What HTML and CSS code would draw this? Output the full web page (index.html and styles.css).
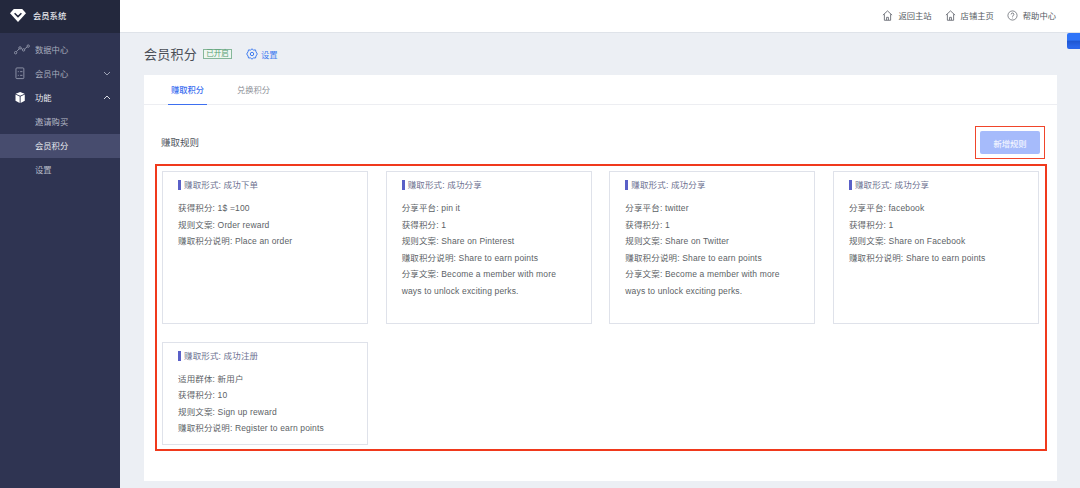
FILE: index.html
```html
<!DOCTYPE html>
<html lang="zh">
<head>
<meta charset="utf-8">
<title>会员积分</title>
<link rel="stylesheet" href="styles.css">
</head>
<body>
<div class="app">
  <aside class="sidebar">
    <div class="brand">
      <svg class="brand-icon" viewBox="0 0 16 13"><path fill="#fff" d="M3.800 0h8.400L16 4.300 8 13 0 4.300z"/><path fill="none" stroke="#23283d" stroke-width="1.500" d="M4.600 4.300L8 7.600l3.400-3.300"/></svg>
      <span>会员系统</span>
    </div>
    <nav class="nav">
      <a class="nav-item">
        <svg class="nav-icon" viewBox="0 0 16 10"><g fill="none" stroke="#9ca1b4" stroke-width=".8"><circle cx="1.600" cy="8.200" r="1.200"/><circle cx="6" cy="3.400" r="1.200"/><circle cx="9.600" cy="5.400" r="1.200"/><circle cx="14.200" cy="1.600" r="1.200"/><path d="M2.400 7.200l2.800-2.900M7.100 4l1.400.8M10.500 4.600l2.800-2.200"/></g></svg>
        <span>数据中心</span>
      </a>
      <a class="nav-item">
        <svg class="nav-icon" viewBox="0 0 16 14"><g fill="none" stroke="#9ca1b4" stroke-width=".9"><rect x="1.500" y="1" width="8.500" height="11.500" rx="1"/><path d="M3.500 5h1M6 5h2.500M3.500 9h1M6 9h2.500"/></g></svg>
        <span>会员中心</span>
        <svg class="chev" viewBox="0 0 8 5"><path fill="none" stroke="#9ca1b4" d="M1 1l3 3 3-3"/></svg>
      </a>
      <a class="nav-item nav-open">
        <svg class="nav-icon" viewBox="0 0 16 14"><path fill="#fff" d="M6 1l4.800 2-4.800 2-4.800-2zM1 3.900l4.500 1.900v7L1 10.600zM11 3.900v6.700l-4.500 2.200v-7z"/></svg>
        <span>功能</span>
        <svg class="chev" viewBox="0 0 8 5"><path fill="none" stroke="#d8dae3" d="M1 4l3-3 3 3"/></svg>
      </a>
      <a class="nav-sub">邀请购买</a>
      <a class="nav-sub nav-active">会员积分</a>
      <a class="nav-sub">设置</a>
    </nav>
  </aside>
  <div class="main">
    <header class="topbar">
      <a class="top-link">
        <svg class="top-icon" viewBox="0 0 12 12"><path fill="none" stroke="#5c6068" stroke-width=".9" d="M1 5.600L6 1l5 4.600M2.600 4.600v6.600h6.800V4.600M5 11V8h2v3"/></svg>
        <span>返回主站</span>
      </a>
      <a class="top-link">
        <svg class="top-icon" viewBox="0 0 12 12"><path fill="none" stroke="#5c6068" stroke-width=".9" d="M1 5.600L6 1l5 4.600M2.600 4.600v6.600h6.800V4.600M5 11V8h2v3"/></svg>
        <span>店铺主页</span>
      </a>
      <a class="top-link">
        <svg class="top-icon" viewBox="0 0 12 12"><circle cx="6" cy="6" r="5" fill="none" stroke="#5c6068" stroke-width=".8"/><path fill="none" stroke="#5c6068" stroke-width=".9" d="M4.500 4.800c0-2 3-2 3 0 0 1.200-1.500 1.200-1.500 2.500"/><circle cx="6" cy="8.800" r=".5" fill="#5c6068"/></svg>
        <span>帮助中心</span>
      </a>
    </header>
    <div class="float-tab"></div>
    <main class="content">
      <div class="page-head">
        <h1>会员积分</h1>
        <span class="status">已开启</span>
        <a class="settings">
          <svg class="gear" viewBox="0 0 12 12"><g fill="none" stroke="#3f7cf0" stroke-width="1"><path d="M6 .8l1.500 1.300 2-.2.500 1.900L11.300 6 10 8 9.500 10l-2-.1L6 11.200 4.500 9.900l-2 .1L2 8 .7 6 2 3.800l.5-1.900 2 .2z"/><circle cx="6" cy="6" r="1.700"/></g></svg>
          <span>设置</span>
        </a>
      </div>
      <section class="panel">
        <div class="tabs">
          <a class="tab tab-active">赚取积分</a>
          <a class="tab">兑换积分</a>
        </div>
        <div class="rules-head">
          <h2>赚取规则</h2>
          <div class="btn-mark"><button class="btn" type="button">新增规则</button></div>
        </div>
        <div class="cards-mark">
          <div class="cards">
            <article class="card">
              <h3>赚取形式: 成功下单</h3>
              <p>获得积分: 1$ =100</p>
              <p>规则文案: Order reward</p>
              <p>赚取积分说明: Place an order</p>
            </article>
            <article class="card">
              <h3>赚取形式: 成功分享</h3>
              <p>分享平台: pin it</p>
              <p>获得积分: 1</p>
              <p>规则文案: Share on Pinterest</p>
              <p>赚取积分说明: Share to earn points</p>
              <p>分享文案: Become a member with more ways to unlock exciting perks.</p>
            </article>
            <article class="card">
              <h3>赚取形式: 成功分享</h3>
              <p>分享平台: twitter</p>
              <p>获得积分: 1</p>
              <p>规则文案: Share on Twitter</p>
              <p>赚取积分说明: Share to earn points</p>
              <p>分享文案: Become a member with more ways to unlock exciting perks.</p>
            </article>
            <article class="card">
              <h3>赚取形式: 成功分享</h3>
              <p>分享平台: facebook</p>
              <p>获得积分: 1</p>
              <p>规则文案: Share on Facebook</p>
              <p>赚取积分说明: Share to earn points</p>
            </article>
            <article class="card">
              <h3>赚取形式: 成功注册</h3>
              <p>适用群体: 新用户</p>
              <p>获得积分: 10</p>
              <p>规则文案: Sign up reward</p>
              <p>赚取积分说明: Register to earn points</p>
            </article>
          </div>
        </div>
      </section>
    </main>
  </div>
</div>
</body>
</html>
```
FILE: styles.css
```css
* { box-sizing: border-box; }
html, body { margin: 0; height: 488px; overflow: hidden; }
body { font-family: "Liberation Sans", "Noto Sans CJK SC", sans-serif; font-size: 8.300px; color: #555; background: #eceff4; }
.app { display: flex; height: 488px; }
.sidebar { width: 120px; flex: none; background: #2f3452; color: #a9adbd; }
.brand { height: 33px; background: #23283d; display: flex; align-items: center; padding: 0 0 3px 10px; gap: 7px; color: #e8e9ee; font-weight: 500; }
.brand-icon { width: 16px; height: 13px; }
.nav { padding-top: 5px; }
.nav-item { height: 24px; display: flex; align-items: center; padding: 0 0 2px 14px; color: #a9adbd; }
.nav-icon { width: 16px; height: 13px; flex: none; margin-right: 5px; }
.chev { width: 8px; height: 5px; margin-left: auto; margin-right: 9px; }
.nav-open { color: #e8e9ee; }
.nav-sub { height: 24px; display: flex; align-items: center; padding: 0 0 2px 35px; color: #b5b8c6; }
.nav-active { background: #474c6e; color: #eceef3; }
.main { flex: 1; min-width: 0; position: relative; display: flex; flex-direction: column; }
.topbar { height: 33px; flex: none; background: #fff; border-bottom: 1px solid #dfe3e9; display: flex; justify-content: flex-end; align-items: center; padding: 0 24px 2px 0; gap: 13px; color: #555a62; }
.top-link { display: flex; align-items: center; gap: 5px; }
.top-icon { width: 11px; height: 11px; }
.float-tab { position: absolute; right: 0; top: 33px; width: 13px; height: 16px; border-radius: 2px 0 0 2px; background: linear-gradient(#2f74f8 45%, #1f56d0 50%, #2a66ea 85%); }
.content { flex: 1; min-height: 0; padding: 0 23px 7px 24px; display: flex; flex-direction: column; }
.page-head { height: 42px; flex: none; display: flex; align-items: center; }
h1 { margin: 0; font-size: 13px; font-weight: 400; color: #4a4e57; line-height: 1; letter-spacing: .25px; padding-top: 1px; }
.status { margin-left: 6px; height: 10px; width: 29px; border: 1px solid #86b79a; background: #eef6f1; color: #55a072; font-size: 7.500px; line-height: 8px; text-align: center; }
.settings { margin-left: 14px; display: flex; align-items: center; gap: 3px; color: #3f7cf0; }
.gear { width: 12px; height: 12px; }
.panel { flex: 1; min-height: 0; background: #fff; display: flex; flex-direction: column; }
.tabs { height: 30px; flex: none; border-bottom: 1px solid #edeef2; display: flex; padding-left: 24px; gap: 27px; }
.tab { height: 30px; width: 39px; text-align: center; line-height: 31px; color: #8d9098; white-space: nowrap; }
.tab-active { color: #3d6ff0; border-bottom: 1px solid #3d6ff0; font-weight: 500; }
.rules-head { flex: none; height: 59px; display: flex; justify-content: space-between; align-items: flex-end; padding: 0 12px 5px 17px; }
h2 { margin: 0; font-size: 9.500px; font-weight: 400; color: #50545c; line-height: 12px; padding-bottom: 10px; }
.btn-mark { border: 1px solid #f0452a; padding: 4px; width: 70px; height: 33px; }
.btn { display: block; width: 60px; height: 23px; border: 0; border-radius: 2px; background: #a6bbfb; color: #f1f4ff; font: inherit; font-weight: 500; padding: 0; }
.cards-mark { margin: 0 10px 0 11px; border: 2px solid #f0391c; padding: 5px 6px 4px 5px; }
.cards { display: grid; grid-template-columns: repeat(4, 206px); column-gap: 17.670px; row-gap: 17.500px; grid-template-rows: 153px 103.500px; }
.card { border: 1px solid #dfe2ea; padding: 7px 15px 0; }
.card h3 { margin: 0 0 8px; font-size: 8.500px; font-weight: 400; color: #6d7190; line-height: 13px; padding-left: 6px; letter-spacing: .15px; position: relative; }
.card h3::before { content: ""; position: absolute; left: 0; top: 1px; width: 3px; height: 10px; background: #5a60c8; }
.card p { margin: 0; font-size: 8.500px; line-height: 16.500px; color: #5c5f66; letter-spacing: .15px; }
```
